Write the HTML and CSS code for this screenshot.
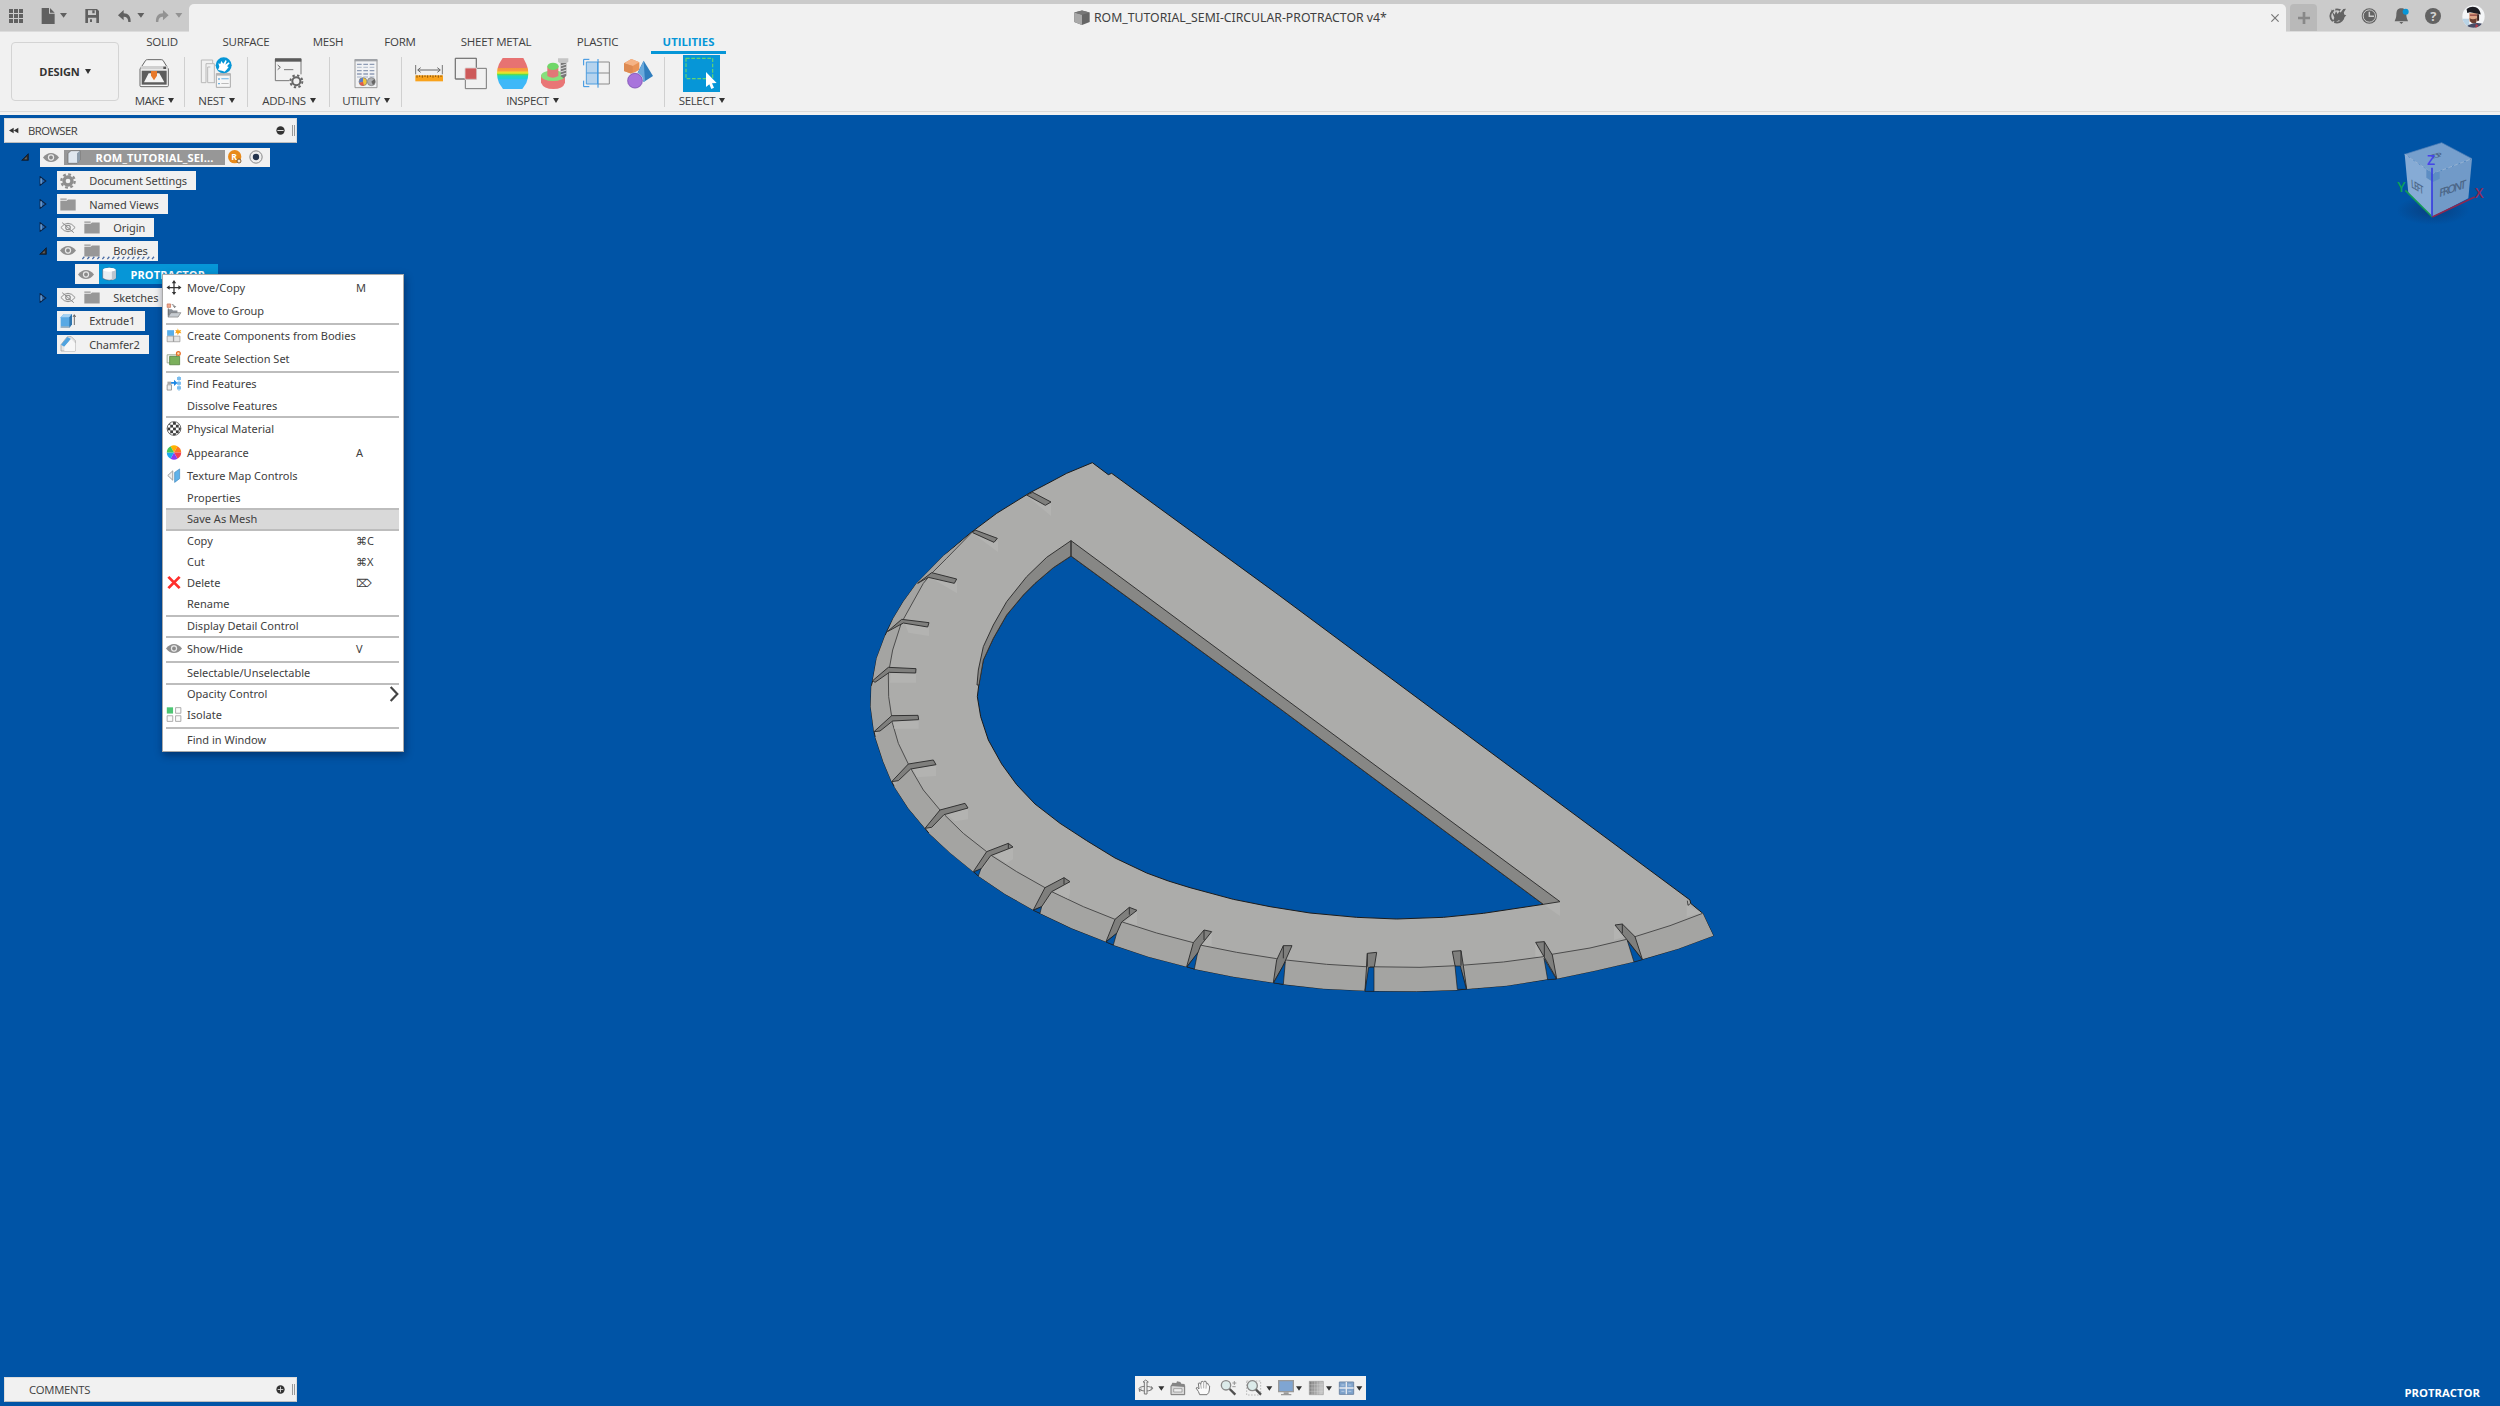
FILE: index.html
```html
<!DOCTYPE html>
<html lang="en">
<head>
<meta charset="utf-8">
<title>ROM_TUTORIAL_SEMI-CIRCULAR-PROTRACTOR v4*</title>
<link rel="stylesheet" href="styles.css">
</head>
<body>
<svg class="defs" width="0" height="0" aria-hidden="true">
  <defs>
    <symbol id="eye" viewBox="0 0 46 30"><path d="M0 15Q10 2 23 2T46 15Q36 28 23 28T0 15Z" fill="#8f8f8f"/><circle cx="23" cy="15" r="9" fill="#e9e9e9"/><circle cx="23" cy="15" r="5.5" fill="#8a8a8a"/></symbol>
    <symbol id="eye-off" viewBox="0 0 46 34"><path d="M1 17Q11 4 23 4T45 17Q35 30 23 30T1 17Z" fill="none" stroke="#8c8c8c" stroke-width="3"/><circle cx="23" cy="17" r="7" fill="none" stroke="#8c8c8c" stroke-width="3.500"/><path d="M5 2L41 33" stroke="#8c8c8c" stroke-width="3"/></symbol>
    <symbol id="folder" viewBox="0 0 48 38"><path d="M1 1H20V5H1ZM1 8H20L24 4H47V37H1Z" fill="#979797"/></symbol>
    <symbol id="closed" viewBox="0 0 20 28"><path d="M2 2L18 14L2 26Z" fill="#2a68ae" stroke="#0b2345" stroke-width="3"/><path d="M4.500 6V22" stroke="#8fb6e0" stroke-width="3"/></symbol>
    <symbol id="open" viewBox="0 0 24 24"><path d="M22 2V22H2Z" fill="#2b2b2b" stroke="#0a1220" stroke-width="2"/><path d="M17 11V19H10Z" fill="#6a6a6a"/></symbol>
  </defs>
</svg>

<header class="titlebar">
  <div class="quick">
    <svg viewBox="0 0 565 96">
      <g fill="#606060"><path d="M27 27h12v12H27zM42 27h12v12H42zM57 27h12v12H57zM27 42h12v12H27zM42 42h12v12H42zM57 42h12v12H57zM27 57h12v12H27zM42 57h12v12H42zM57 57h12v12H57z"/>
      <path d="M125 24h22v17h17v31h-39zM150 24l14 14h-14zM180 39h21l-10 14zM412 39h21l-10 14z"/>
      <path fill-rule="evenodd" d="M256 27h35l6 6v36h-41zM264 31v14h24V31zM264 53v16h25V53z"/><path d="M277 31h7v9h-7zM270 58h6v8h-6z"/>
      <path d="M354 46l17-16v10c14 0 22 10 21 26h-7c0-11-5-16-14-16v11z"/></g>
      <g fill="#939393"><path d="M506 46l-17-16v10c-14 0-22 10-21 26h7c0-11 5-16 14-16v11zM526 39h21l-10 14z"/></g>
    </svg>
  </div>
  <div class="doc-tab">
    <svg class="doc-cube" viewBox="0 0 48 46"><path d="M1 7L24 1L47 7V36L24 45L1 36Z" fill="#666"/><path d="M1 7L24 14V45L1 36Z" fill="#a9a9a9"/><path d="M1 7L24 1L47 7L24 14Z" fill="#777"/></svg>
    <span>ROM_TUTORIAL_SEMI-CIRCULAR-PROTRACTOR v4*</span>
    <svg class="close" viewBox="0 0 24 24"><path d="M1 1L23 23M23 1L1 23" stroke="#777" stroke-width="3.5"/></svg>
  </div>
  <div class="session">
    <div class="new-tab"><svg viewBox="0 0 36 36"><path d="M14 0h8v14h14v8H22v14h-8V22H0v-8h14z" fill="#888"/></svg></div>
    <svg class="status" viewBox="485 0 291 96">
      <circle cx="530" cy="48" r="20" fill="none" stroke="#636363" stroke-width="5.500"/><path d="M511 26l12 18 4-10 5 8 9-14 16-2-10 17 11 3-8 8-7 10-8-3-9 6-8-4 4-10z" fill="#636363"/><path d="M516 18l8 14M520 64l-4 11M548 24l-9 12" stroke="#cbcbcb" stroke-width="5"/>
      <circle cx="627" cy="48" r="23" fill="#636363"/><circle cx="627" cy="48" r="18.500" fill="none" stroke="#cbcbcb" stroke-width="3"/><path d="M627 35v14h14" fill="none" stroke="#cbcbcb" stroke-width="4.500"/>
      <path d="M723 25c12 0 15 8 15 20 0 10 4 13 5 19h-40c1-6 5-9 5-19 0-12 3-20 15-20z M717 66h12l-6 6z" fill="#636363"/><circle cx="736" cy="35" r="9" fill="#0696d7"/>
    </svg>
    <span class="help">?</span>
    <svg class="avatar" viewBox="0 0 70 70"><defs><clipPath id="round"><circle cx="35" cy="35" r="34"/></clipPath></defs><g clip-path="url(#round)"><path d="M0 0h70v70H0z" fill="#f4f6f8"/><path d="M0 42h22v28H0z" fill="#b9d2e4"/><path d="M22 24h26v26H22z" fill="#dba587"/><path d="M14 12q14-10 28-5 12 4 15 22l-9-2-24-5-8 2z" fill="#1c1c22"/><path d="M24 29h22v4H24z" fill="#8c3f3c"/><path d="M23 40q10 6 22 0l-2 15q-12 4-18-5z" fill="#6a4034"/><path d="M14 66q14-14 46-10v14H14z" fill="#474c66"/><path d="M46 28h6v20h-6z" fill="#3a2522"/><path d="M42 58l7 4-3 8h-6z" fill="#b33c4a"/></g></svg>
  </div>
</header>

<div class="ribbon">
  <button class="workspace">DESIGN<i class="caret"></i></button>
  <div class="ribbon-main">
    <nav class="tabs">
      <span class="tab w76">SOLID</span><span class="tab w92">SURFACE</span><span class="tab w72">MESH</span><span class="tab w72">FORM</span><span class="tab w120">SHEET METAL</span><span class="tab w83">PLASTIC</span><span class="tab active">UTILITIES</span>
    </nav>
    <div class="groups">
      <section class="group g-make">
        <div class="icons"><svg viewBox="416 172 96 96" width="32" height="32"><path d="M422 208l17-26q2-2 5-2h42q3 0 5 2l16 26v50q0 3-3 3h-79q-3 0-3-3z" fill="#f7f7f7" stroke="#666" stroke-width="3"/><path d="M424 199h82v10h-82z" fill="#d0d0d0"/><path d="M492 201h8v7h-8z" fill="#555"/><path d="M427 213h75v42h-75z" fill="#5c5c5c"/><path d="M434 248l14-27h9l7 16 7-16h9l15 27z" fill="#f3f3f3"/><path d="M455 214h18v14l-9 14-9-14z" fill="#e8792a"/></svg></div>
        <div class="label">MAKE<i class="caret"></i></div>
      </section>
      <section class="group g-nest">
        <div class="icons"><svg viewBox="604 172 96 96" width="32" height="32"><path d="M608 181h34v10M608 181v68h14v-57h25v57M627 249h22M627 249v-47h8" fill="none" stroke="#b9b9b9" stroke-width="3"/><path d="M653 222h42v41h-42z" fill="#f6f6f6" stroke="#aaa" stroke-width="3"/><path d="M653 221h42v7h-42z" fill="#b5b5b5"/><path d="M658 236h6v4h-6zM658 250h6v4h-6zM668 236h22v3h-22z" fill="#6fb3e2"/><path d="M668 250h22v3h-22z" fill="#bbb"/><circle cx="675" cy="197" r="24" fill="#0696d7"/><path d="M658 211l4-10-3-10 6 2 3-9 6 8 7-11 3 3-4 11 10-7 3 3-8 9 5 2-5 7-7 7-8-3z" fill="#fff"/></svg></div>
        <div class="label">NEST<i class="caret"></i></div>
      </section>
      <section class="group g-addins">
        <div class="icons"><svg viewBox="820 172 96 96" width="32" height="32"><path d="M827 178h77v46M827 178v65h42" fill="none" stroke="#777" stroke-width="3"/><path d="M826 176h79v10h-79z" fill="#5b5b5b"/><path d="M834 196l8 7-8 7" fill="none" stroke="#666" stroke-width="3"/><path d="M853 210h28" stroke="#777" stroke-width="3"/><circle cx="890" cy="245" r="12" fill="none" stroke="#666" stroke-width="6"/><circle cx="890" cy="245" r="18" fill="none" stroke="#666" stroke-width="6" stroke-dasharray="7 7.140"/></svg></div>
        <div class="label">ADD-INS<i class="caret"></i></div>
      </section>
      <section class="group g-utility">
        <div class="icons"><svg viewBox="1052 172 96 96" width="32" height="32"><path d="M1067 180h66v84h-66z" fill="#f1f2f4" stroke="#9a9a9a" stroke-width="3"/><path d="M1066 178h68v7h-68z" fill="#a0a3a8"/><path d="M1073 194h14M1092 194h14M1111 194h14M1073 213h14M1092 213h14M1111 213h14M1073 223h14M1092 223h14M1111 223h14" stroke="#8e9cb5" stroke-width="4"/><path d="M1073 203h14M1092 203h14M1111 203h14M1073 232h14M1092 232h14M1111 232h14" stroke="#bcc5d3" stroke-width="4"/><circle cx="1091" cy="246" r="12" fill="#f0c63c" stroke="#777" stroke-width="2"/><path d="M1091 246V234a12 12 0 0 0-11 16z" fill="#5d7cc9"/><path d="M1091 246l-11 4a12 12 0 0 0 14 8z" fill="#df5a4e"/><circle cx="1116" cy="246" r="12" fill="#aeb0b3" stroke="#777" stroke-width="2"/><path d="M1116 246l9-8a12 12 0 0 1-4 18z" fill="#666"/></svg></div>
        <div class="label">UTILITY<i class="caret"></i></div>
      </section>
      <section class="group g-inspect">
        <div class="icons">
          <svg viewBox="36 168 102 102" width="34" height="34"><path d="M46 226h83v18H46z" fill="#f9a21b"/><path d="M51 226v7M59 226v5M67 226v7M75 226v5M83 226v7M91 226v5M99 226v7M107 226v5M115 226v7M123 226v5" stroke="#8a5408" stroke-width="3"/><path d="M47 195v28M127 195v28" stroke="#777" stroke-width="3"/><path d="M54 210h66M62 203l-9 7 9 7M112 203l9 7-9 7" fill="none" stroke="#666" stroke-width="3"/></svg>
          <svg viewBox="162 168 102 102" width="34" height="34"><path d="M166 175h63v62h-63zM196 205h63v61h-63z" fill="#f1f1f1" stroke="#777" stroke-width="3"/><path d="M166 175h63v62h-63z" fill="none" stroke="#777" stroke-width="3"/><path d="M195 204h35v34h-35z" fill="#cd5a5a" stroke="#f1f1f1" stroke-width="2"/></svg>
          <svg viewBox="288 168 102 102" width="34" height="34"><defs><linearGradient id="zebra" x2="0" y2="1"><stop offset="0" stop-color="#e77272"/><stop offset=".32" stop-color="#e77272"/><stop offset=".33" stop-color="#f4953f"/><stop offset=".42" stop-color="#f9a03b"/><stop offset=".45" stop-color="#f6e02c"/><stop offset=".5" stop-color="#c7e32f"/><stop offset=".53" stop-color="#5fdc4b"/><stop offset=".58" stop-color="#22d5c3"/><stop offset=".68" stop-color="#1dcbe5"/><stop offset=".7" stop-color="#3fb8f8"/><stop offset="1" stop-color="#3fb8f8"/></linearGradient></defs><path d="M308 174h62l9 18q12 28 0 57l-12 18h-58l-12-18q-12-29 0-57z" fill="url(#zebra)"/></svg>
          <svg viewBox="414 168 102 102" width="34" height="34"><path d="M423 226v22q8 19 37 19t35-19v-22z" fill="#e97676"/><ellipse cx="459" cy="227" rx="36" ry="16" fill="#86e07c"/><path d="M442 200v28q16 10 33 0v-28z" fill="#e27777"/><ellipse cx="459" cy="199" rx="17" ry="11" fill="#6fd768"/><path d="M474 175h31v10l-5 4h-21l-5-4z" fill="#c5c5c5"/><path d="M482 189h17v38l-8 8-9-6z" fill="#777"/><path d="M481 198l19-6M481 207l19-6M481 216l19-6M481 225l19-6" stroke="#dcdcdc" stroke-width="3"/></svg>
          <svg viewBox="540 168 102 102" width="34" height="34"><path d="M594 186h34v66h-34M594 219h34" fill="none" stroke="#8b8b8b" stroke-width="3"/><path d="M560 186h33v66h-33z" fill="#b5d3ee"/><path d="M559 186h34v66h-34zM559 219h34" fill="none" stroke="#4f9ddd" stroke-width="3"/><path d="M568 178h-17v18M568 260h-17v-18M594 177v86" fill="none" stroke="#2f8fe0" stroke-width="3"/></svg>
          <svg viewBox="666 168 102 102" width="34" height="34"><path d="M672 190l22-13 24 10v22l-22 13-24-9z" fill="#e99357"/><path d="M672 190l22-13 24 10-20 11z" fill="#f5b386"/><path d="M698 198v24l-26-9v-23z" fill="#dd8a52"/><path d="M731 182l28 46-28 18-20-24z" fill="#2f7dbd"/><path d="M731 182l4 63-24-20z" fill="#69a9dc"/><circle cx="705" cy="242" r="23.500" fill="#a874dc" stroke="#f1f1f1" stroke-width="2"/><circle cx="705" cy="242" r="22" fill="none" stroke="#744aa8" stroke-width="2"/></svg>
        </div>
        <div class="label">INSPECT<i class="caret"></i></div>
      </section>
      <section class="group g-select">
        <div class="icons"><svg viewBox="849 165 111 111" width="37" height="37"><path d="M849 165h111v111H849z" fill="#0696d7"/><path d="M858 175h80v61h-80z" fill="none" stroke="#63d471" stroke-width="3.500" stroke-dasharray="11 5"/><path d="M918 216v45l10-8 6 14 8-4-6-13 14-1z" fill="#fff"/></svg></div>
        <div class="label">SELECT<i class="caret"></i></div>
      </section>
    </div>
  </div>
</div>

<main class="viewport">
  <svg class="model" viewBox="0 0 2610 1680">
    <path fill="#acacaa" stroke="#1b1b1b" stroke-width="3" stroke-linejoin="round" fill-rule="evenodd" d="M697 38L620 70L560 102L510 128L410 190L330 250L250 318L170 400L130 455L100 505L80 545L75 558L50 625L38 692L34 708L32 770L42 845L46 862L70 935L95 995L103 1010L145 1075L195 1135L207 1150L270 1208L340 1265L355 1278L435 1332L520 1380L540 1390L635 1435L738 1475L760 1485L865 1520L980 1550L1003 1557L1120 1580L1240 1598L1270 1603L1390 1616L1515 1622L1542 1623L1670 1624L1792 1620L1820 1617L1940 1607L2062 1588L2090 1586L2205 1562L2322 1535L2347 1528L2455 1496L2560 1457L2528 1390L2492 1360L2490 1350L1842 870L1260 438L755 70L745 74ZM633 318L580 353L525 400L490 435L440 495L400 565L370 630L357 700L352 740L362 800L385 870L425 942L470 1004L525 1062L600 1120L680 1172L765 1224L860 1269L925 1293L990 1313L1120 1348L1230 1370L1350 1389L1490 1402L1610 1407L1750 1402L1870 1390L2050 1363L1260 776Z"/>
    <g fill="#a4a4a2"><path d="M325 258L260 325L215 370L190 400L130 508L82 545L100 505L130 455L170 400L250 318ZM122 525L98 600L88 655L38 692L50 625L75 558L85 545ZM85 668L86 740L95 800L42 845L32 770L34 708L45 697ZM97 818L115 880L145 942L95 995L70 935L46 862L60 843ZM155 960L190 1020L240 1080L195 1135L145 1075L103 1010L115 992ZM255 1096L310 1150L380 1205L340 1265L270 1208L207 1150L215 1132ZM395 1217L470 1265L555 1313L520 1380L435 1332L355 1278ZM575 1325L670 1370L765 1408L738 1475L635 1435L540 1390ZM787 1416L890 1449L1000 1478L980 1550L865 1520L760 1485ZM1022 1486L1130 1507L1250 1526L1240 1598L1120 1580L1003 1557ZM1278 1530L1400 1543L1515 1550V1622L1390 1616L1270 1603ZM1542 1551L1680 1552L1790 1547L1792 1620L1670 1624L1542 1623ZM1815 1545L1930 1536L2050 1520L2062 1588L1940 1607L1820 1617ZM2075 1513L2190 1494L2300 1468L2322 1535L2205 1562L2090 1586ZM2325 1460L2430 1427L2528 1390L2560 1457L2455 1496L2347 1528Z"/></g>
    <path fill="none" stroke="#4c4c4c" stroke-width="3" d="M335 248L260 325L215 370L190 400L130 508L122 525L98 600L88 655L85 675L86 740L95 800L97 818L115 880L145 942L155 960L190 1020L240 1080L255 1096L310 1150L380 1205L395 1217L470 1265L555 1313L575 1325L670 1370L765 1408L787 1416L890 1449L1000 1478L1020 1485L1130 1507L1250 1526L1278 1530L1400 1543L1515 1550L1680 1552L1790 1547L1815 1545L1930 1536L2050 1520L2075 1513L2190 1494L2300 1468L2325 1460L2430 1427L2528 1390"/>
    <path fill="#b3b3b1" d="M500 137L556 166L573 160V198ZM345 255L402 278L414 272V306ZM215 385L283 400L291 392V430ZM135 521L203 531L207 525V558L145 548ZM92 670H168V698H90ZM100 815L176 808V836H103ZM160 957L228 945V978L170 982ZM262 1094L324 1075V1108L285 1114ZM402 1217L459 1192V1228L440 1240ZM582 1325L630 1296V1330L625 1346ZM795 1416L831 1383V1425ZM1025 1484L1055 1448V1488ZM2100 1355L2050 1363L2100 1398ZM2290 1462L2262 1425V1470ZM2046 1518L2026 1480V1520ZM2480 1365V1400L2525 1388Z"/>
    <g stroke="#333" stroke-width="3" stroke-linejoin="round">
      <path fill="#878785" d="M633 272L560 322L500 380L440 455L400 525L370 590L355 660L351 705L357 705L370 630L400 565L440 495L490 435L525 400L580 353L633 318ZM633 272L1260 735L2100 1355L2050 1363L1260 776L633 318Z"/>
      <path fill="#7f7f7d" d="M500 135L518 127L573 156L556 166ZM338 248L345 240L412 265L402 277ZM173 400L215 368L290 387L283 400L205 382ZM82 545L125 508L207 518L203 531L130 519ZM38 692L85 652L168 656L167 669L88 667L45 697ZM42 845L95 797L174 796L176 809L98 813L60 843ZM95 995L145 942L220 930L228 944L152 957L115 992ZM195 1135L240 1080L315 1060L324 1074L252 1094L215 1132ZM340 1265L380 1205L445 1180L459 1191L392 1217L362 1258ZM520 1380L555 1313L612 1283L630 1295L575 1325L545 1370ZM738 1475L765 1408L808 1372L831 1381L785 1416L770 1450ZM980 1550L1000 1478L1032 1440L1055 1445L1022 1486L1013 1510ZM1240 1598L1250 1530L1270 1487H1296L1277 1530L1268 1550ZM1515 1622L1522 1510L1550 1507L1543 1551H1530ZM1777 1504L1803 1502L1810 1547L1820 1617L1803 1560L1785 1547ZM2027 1477L2053 1475L2077 1515L2090 1586L2052 1520ZM2265 1425L2287 1422L2325 1460L2347 1528L2300 1468Z"/>
      <path fill="none" d="M445 1180V1196M612 1283V1303M808 1372V1394M1032 1440V1470M1270 1487V1525M1522 1510V1550M1803 1502V1547M2053 1475V1520M2287 1422V1450"/>
    </g>
    <g fill="#0054a6" stroke="#1b1b1b" stroke-width="2"><path d="M363 1256L342 1266L355 1278ZM545 1370L520 1381L540 1390ZM770 1450L738 1476L760 1485ZM1013 1508L981 1551L1003 1557ZM1276 1535L1241 1599L1270 1603ZM1526 1552H1542V1624H1515ZM1785 1548H1801L1819 1618H1792ZM2052 1525L2089 1587L2063 1589ZM2302 1472L2347 1529L2322 1536Z"/></g>
    <path fill="none" stroke="#333" stroke-width="2.500" d="M2482 1352L2484 1366L2492 1360"/>
  </svg>

  <svg class="viewcube" viewBox="460 410 300 270">
    <defs><radialGradient id="shade"><stop offset="0" stop-color="#083f80"/><stop offset="1" stop-color="#0054a6"/></radialGradient></defs>
    <ellipse cx="580" cy="630" rx="110" ry="44" fill="url(#shade)"/>
    <path d="M495 462L606 427L697 475L580 520Z" fill="#769fcd"/><path d="M495 462L580 520L578 650L506 578Z" fill="#86abd5"/><path d="M580 520L697 475L686 594L578 650Z" fill="#719ac8"/>
    <path d="M495 462L606 427L697 475" fill="none" stroke="#5582b8" stroke-width="2"/><path d="M495 462L580 520L697 475" fill="none" stroke="#9ab5d4" stroke-width="3" stroke-dasharray="12 7"/><path d="M560 506L580 520L600 512V535L580 545L560 532Z" fill="#5d8dc3"/>
    <g fill="#4c6788" font-family="Open Sans, sans-serif" font-weight="600"><text transform="matrix(.62 .36 .05 1 515 561)" font-size="34" textLength="60">LEFT</text><text transform="matrix(.94 -.34 -.06 1 598 591)" font-size="34" textLength="86">FRONT</text><text transform="matrix(.9 -.25 .6 .5 576 476)" font-size="28" textLength="42">TOP</text></g>
    <path d="M578 650L497 570" stroke="#119c55" stroke-width="5"/><path d="M578 650L705 590" stroke="#8d2750" stroke-width="5"/><path d="M577 502V648" stroke="#3a3fe0" stroke-width="5"/>
    <g font-family="Open Sans, sans-serif" font-weight="600" font-size="42"><text x="562" y="494" fill="#4545e8">Z</text><text x="473" y="574" fill="#0ca25a">Y</text><text x="705" y="594" fill="#8f2a55">X</text></g>
  </svg>

  <aside class="side">
    <div class="panel-head">
      <svg class="collapse" viewBox="0 0 30 20"><path d="M0 10L14 2V18ZM14 10L28 2V18Z" fill="#333"/></svg>
      <span>BROWSER</span>
      <svg class="pin" viewBox="0 0 26 26"><circle cx="13" cy="13" r="12" fill="#333"/><path d="M4 13h18" stroke="#ddd" stroke-width="3"/></svg><i class="grip"></i>
    </div>
    <ul class="tree">
      <li class="row root"><svg class="arrow a-open"><use href="#open"/></svg><div class="box"><svg class="eye"><use href="#eye"/></svg><div class="title"><svg viewBox="0 0 42 42" width="14" height="14"><path d="M3 10L12 2H39V30L30 40H3Z" fill="#dfe7ef" stroke="#666" stroke-width="2"/><path d="M30 10L39 2V30L30 40Z" fill="#8c9cab"/></svg><b>ROM_TUTORIAL_SEI...</b></div><svg class="badge" viewBox="0 0 42 42"><circle cx="20" cy="20" r="20" fill="#e88a1a"/><circle cx="33" cy="33" r="6" fill="#f6e7d2" stroke="#70481a" stroke-width="2.500"/><text x="10" y="29" font-family="Open Sans, sans-serif" font-weight="700" font-size="26" fill="#fff">R</text></svg><svg class="radio" viewBox="0 0 42 42"><circle cx="21" cy="21" r="18.500" fill="#eee" stroke="#888" stroke-width="3"/><circle cx="21" cy="21" r="9.500" fill="#24344d"/></svg></div></li>
      <li class="row l1"><svg class="arrow"><use href="#closed"/></svg><div class="box w-doc"><svg class="ico" viewBox="0 0 48 48"><circle cx="24" cy="24" r="12" fill="none" stroke="#8e8e8e" stroke-width="10"/><circle cx="24" cy="24" r="20" fill="none" stroke="#8e8e8e" stroke-width="7" stroke-dasharray="8.500 7.200"/></svg><span class="name">Document Settings</span></div></li>
      <li class="row l1"><svg class="arrow"><use href="#closed"/></svg><div class="box w-views"><svg class="ico fold"><use href="#folder"/></svg><span class="name">Named Views</span></div></li>
      <li class="row l1"><svg class="arrow"><use href="#closed"/></svg><div class="box w-origin"><svg class="eye"><use href="#eye-off"/></svg><svg class="ico fold"><use href="#folder"/></svg><span class="name near">Origin</span></div></li>
      <li class="row l1"><svg class="arrow a-open"><use href="#open"/></svg><div class="box w-bodies hatch"><svg class="eye"><use href="#eye"/></svg><svg class="ico fold"><use href="#folder"/></svg><span class="name near">Bodies</span><svg class="ticks" viewBox="0 0 222 10"><path d="M4 9l6-7M19 9l6-7M34 9l6-7M49 9l6-7M64 9l6-7M79 9l6-7M94 9l6-7M109 9l6-7M124 9l6-7M139 9l6-7M154 9l6-7M169 9l6-7M184 9l6-7M199 9l6-7M213 9l6-7" stroke="#4c6ea6" stroke-width="4"/></svg></div></li>
      <li class="row l2"><div class="box w-prot"><svg class="eye"><use href="#eye"/></svg><div class="selected"><svg viewBox="0 0 44 42" width="14.500" height="14"><path d="M2 8Q22-4 42 8V34Q22 46 2 34Z" fill="#e9edf1" stroke="#556" stroke-width="1.500"/><path d="M30 4Q38 5 42 8V34Q38 38 30 40Z" fill="#bcc5ce"/><ellipse cx="22" cy="8" rx="19" ry="6" fill="#fff"/></svg><b>PROTRACTOR</b></div></div></li>
      <li class="row l1"><svg class="arrow"><use href="#closed"/></svg><div class="box w-sketch"><svg class="eye"><use href="#eye-off"/></svg><svg class="ico fold"><use href="#folder"/></svg><span class="name near">Sketches</span></div></li>
      <li class="row l1"><i class="arrow"></i><div class="box w-ext"><svg class="ico" viewBox="0 0 48 48"><path d="M2 13L11 3H36V34L27 45H2Z" fill="#58a9e4"/><path d="M2 13L11 3H36L28 13Z" fill="#a6d2f2"/><path d="M28 13L36 3V34L28 45Z" fill="#2f75ad"/><path d="M3 40H28V45H3Z" fill="#9fb3c2"/><path d="M43 36V6M39 12l4-7 4 7" fill="none" stroke="#555" stroke-width="2.500"/></svg><span class="name">Extrude1</span></div></li>
      <li class="row l1"><i class="arrow"></i><div class="box w-cham"><svg class="ico" viewBox="0 0 48 48"><path d="M3 26L22 2H34L46 14V45H3Z" fill="#e4e4e4" stroke="#999" stroke-width="2"/><path d="M3 26L22 3L33 9L13 32Z" fill="#50a3df"/><path d="M13 32L33 9L46 22V45H13Z" fill="#f7f7f7"/></svg><span class="name">Chamfer2</span></div></li>
    </ul>
  </aside>

  <footer class="bottom">
    <div class="panel-head comments"><span>COMMENTS</span><svg class="pin" viewBox="0 0 26 26"><circle cx="13" cy="13" r="12" fill="#333"/><path d="M5 13h16M13 5v16" stroke="#ddd" stroke-width="2.500"/></svg><i class="grip"></i></div>
    <div class="navbar"><svg viewBox="45 48 693 72">
      <g fill="none" stroke="#777" stroke-width="3"><ellipse cx="77" cy="86" rx="20" ry="7"/><path d="M73 102V66h-4l8-6 8 6h-4v36z" fill="#eee"/><path d="M60 96l-3-7 8-2M94 79l4 6-7 3"/></g>
      <g><path d="M153 77h41v27h-41z" fill="#d8d8d8" stroke="#777" stroke-width="3"/><path d="M153 77l4-9 12 1 2-5 10 2 3 5 10 1v9z" fill="#858585"/><path d="M161 86h25v10h-25z" fill="#eee" stroke="#888" stroke-width="2"/></g>
      <path d="M239 104q-2-9-11-20 4-4 9 3l-2-17q5-4 7 3l2-8q5-3 7 2l3-4q6 0 5 7 6-2 6 5l4 3-1 12q0 8-7 14z" fill="#fafafa" stroke="#777" stroke-width="3"/><path d="M242 73l2 13M251 68v17M259 70l-1 16" stroke="#888" stroke-width="2"/>
      <g><circle cx="318" cy="76" r="14" fill="#dcebea" stroke="#888" stroke-width="4"/><path d="M329 87l17 17" stroke="#505050" stroke-width="7"/><path d="M343 63v12M337 69h12M337 80h10" stroke="#888" stroke-width="2.500"/></g>
      <g><path d="M380 63h42v42h-42z" fill="none" stroke="#bbb" stroke-width="3" stroke-dasharray="5 4"/><circle cx="397" cy="77" r="15" fill="#dcebea" stroke="#888" stroke-width="4"/><path d="M408 89l15 15" stroke="#505050" stroke-width="7"/></g>
      <g><path d="M476 62h44v33h-44z" fill="#7fa5d2" stroke="#999" stroke-width="4"/><path d="M491 97h15v5h8v4h-31v-4h8z" fill="#999"/></g>
      <defs><linearGradient id="gridshade" x2="1" y2=".2"><stop offset="0" stop-color="#777"/><stop offset="1" stop-color="#c8c8c8"/></linearGradient></defs><path d="M568 64h42v40h-42z" fill="url(#gridshade)" stroke="#999" stroke-width="2"/><path d="M576 64v40M584 64v40M592 64v40M600 64v40M568 74h42M568 84h42M568 94h42" stroke="#ddd" stroke-width="1"/>
      <path d="M658 66h43v37h-43z" fill="#7fa3cc" stroke="#6f87a5" stroke-width="3"/><path d="M679 66v37M658 84h43" stroke="#e6e9ee" stroke-width="4"/><path d="M664 75h9M685 75h9M664 94h9M685 94h9" stroke="#b6cbe3" stroke-width="3"/>
      <path d="M115 79h18l-9 13zM439 79h18l-9 13zM528 79h18l-9 13zM618 79h18l-9 13zM709 79h18l-9 13z" fill="#333"/>
    </svg></div>
    <strong class="hint">PROTRACTOR</strong>
  </footer>
</main>

<div class="menu">
  <div class="mi h24"><svg viewBox="0 0 48 48"><path d="M24 5v38M5 24h38" stroke="#333" stroke-width="4"/><path d="M24 0l7 10H17zM24 48l7-10H17zM0 24l10-7v14zM48 24l-10-7v14z" fill="#333"/></svg><span>Move/Copy</span><kbd>M</kbd></div>
  <div class="mi h23"><svg viewBox="0 0 48 48"><path d="M4 20h13l4 4h14v20H4z" fill="#8a9097"/><path d="M14 31h32l-9 14H5z" fill="#c7ccd1" stroke="#777" stroke-width="2"/><path d="M2 3h11v11H2z" fill="#f0a98c" stroke="#c0694d" stroke-width="2"/><path d="M17 5q9 0 9 8M22 10l4 5 4-5M6 17v22" fill="none" stroke="#666" stroke-width="2.500"/></svg><span>Move to Group</span></div>
  <hr>
  <div class="mi h23"><svg viewBox="0 0 48 48"><path d="M2 7h22v18H2z" fill="#58aeea"/><path d="M2 26h20v18H2zM23 26h20v18H23z" fill="#e4e4e4" stroke="#888" stroke-width="2"/><path d="M36 1l3 7 8-2-3 6 4 5-8-1-4 7-2-7-7 1 4-5-3-6 7 1z" fill="#f8a51b"/></svg><span>Create Components from Bodies</span></div>
  <div class="mi h23"><svg viewBox="0 0 48 48"><path d="M2 12h30v26H2z" fill="#f4f4f4" stroke="#8b9c82" stroke-width="2.500"/><path d="M10 17h32v27H10z" fill="#7bb05c" stroke="#55803f" stroke-width="2.500"/><circle cx="38" cy="8" r="6" fill="#fbe1b5" stroke="#e66a22" stroke-width="4"/></svg><span>Create Selection Set</span></div>
  <hr>
  <div class="mi h23"><svg viewBox="0 0 48 48"><path d="M34 3h12v10H34zM34 18h12v10H34zM34 33h12v10H34z" fill="#6db7ee"/><path d="M40 0v48" stroke="#89c4f1" stroke-width="3"/><path d="M14 19h10v-7l11 10-11 10v-7H14z" fill="#1e88e5"/><path d="M2 28h14v17H2z" fill="#ececec" stroke="#888" stroke-width="2.500"/><path d="M3 18h12v8H3z" fill="#aaa"/></svg><span>Find Features</span></div>
  <div class="mi h20"><span>Dissolve Features</span></div>
  <hr>
  <div class="mi h23"><svg viewBox="0 0 48 48"><defs><pattern id="check" x="3" y="3" width="18" height="18" patternUnits="userSpaceOnUse"><path d="M0 0h9v9H0zM9 9h9v9H9z" fill="#3c3c3c"/></pattern></defs><circle cx="24" cy="24" r="22.500" fill="#fff"/><circle cx="24" cy="24" r="22" fill="url(#check)" stroke="#666" stroke-width="3"/></svg><span>Physical Material</span></div>
  <div class="mi h24"><svg viewBox="0 0 48 48"><path d="M24 24L13 4a23 23 0 0 1 22 0z" fill="#ffb300"/><path d="M24 24L35 4a23 23 0 0 1 12 20z" fill="#ff7a22"/><path d="M24 24H47a23 23 0 0 1-12 20z" fill="#f4404f"/><path d="M24 24l11 20a23 23 0 0 1-22 0z" fill="#8b3df0"/><path d="M24 24L13 44A23 23 0 0 1 1 24z" fill="#1aa8f0"/><path d="M24 24H1A23 23 0 0 1 13 4z" fill="#43c85a"/></svg><span>Appearance</span><kbd>A</kbd></div>
  <div class="mi h23"><svg viewBox="0 0 48 48"><path d="M4 24L20 9v30z" fill="#eee" stroke="#999" stroke-width="3"/><path d="M26 14L42 3v31L26 46z" fill="#5fb2ea" stroke="#3d83b8" stroke-width="2"/></svg><span>Texture Map Controls</span></div>
  <div class="mi h20"><span>Properties</span></div>
  <hr>
  <div class="mi h19 hover"><span>Save As Mesh</span></div>
  <hr>
  <div class="mi h21"><span>Copy</span><kbd>⌘C</kbd></div>
  <div class="mi h20"><span>Cut</span><kbd>⌘X</kbd></div>
  <div class="mi h22"><svg viewBox="0 0 48 48"><path d="M6 6L42 42M42 6L6 42" stroke="#ff2f2c" stroke-width="9"/></svg><span>Delete</span><kbd>⌦</kbd></div>
  <div class="mi h21"><span>Rename</span></div>
  <hr>
  <div class="mi h19"><span>Display Detail Control</span></div>
  <hr>
  <div class="mi h23"><svg><use href="#eye"/></svg><span>Show/Hide</span><kbd>V</kbd></div>
  <hr>
  <div class="mi h20"><span>Selectable/Unselectable</span></div>
  <hr>
  <div class="mi h19"><span>Opacity Control</span><svg class="sub" viewBox="0 0 28 48"><path d="M4 3L24 24L4 45" fill="none" stroke="#444" stroke-width="6.500"/></svg></div>
  <div class="mi h23"><svg viewBox="0 0 48 48"><path d="M1 1h20v20H1z" fill="#4cc573"/><path d="M29 2h17v18H29zM2 28h18v18H2zM29 28h17v18H29z" fill="#fafafa" stroke="#999" stroke-width="2.500"/></svg><span>Isolate</span></div>
  <hr>
  <div class="mi h22"><span>Find in Window</span></div>
</div>
</body>
</html>
```
FILE: styles.css
```css
* { box-sizing: border-box; }
html, body { margin: 0; height: 100%; }
body {
  display: flex;
  flex-direction: column;
  height: 1406px;
  overflow: hidden;
  background: #f1f1f1;
  color: #404040;
  font: 11px "Noto Sans", "Open Sans", sans-serif;
}
svg { display: block; flex: none; }
.defs { position: absolute; }

/* title bar */
.titlebar { display: flex; height: 32px; flex: none; background: #cbcbcb; border-bottom: 1px solid #dcdcdc; }
.quick { width: 189px; flex: none; }
.quick svg { width: 188.3px; height: 32px; }
.doc-tab {
  display: flex;
  align-items: center;
  flex: 1;
  height: 28px;
  margin-top: 4px;
  padding: 0 7px 0 885px;
  background: #f1f1f1;
  border-radius: 5px 5px 0 0;
  font-size: 12.25px;
}
.doc-tab span { flex: 1; margin-left: 4px; line-height: 28px; }
.doc-cube { width: 16px; height: 15.5px; }
.doc-tab .close { width: 8px; height: 8px; }
.session { display: flex; width: 214px; flex: none; padding-left: 4px; }
.new-tab { display: grid; place-items: center; flex: none; width: 27px; height: 27px; margin-top: 4px; background: #b9b9b9; border-radius: 4px 4px 0 0; }
.new-tab svg { width: 12px; height: 12px; }
.status { width: 97px; height: 32px; margin-left: 4.7px; margin-right: -5.4px; }
.help { flex: none; width: 16px; height: 16px; margin: 8px 20.5px 0 12px; border-radius: 50%; background: #636363; color: #d2d2d2; font: 700 13px/16px "Open Sans", sans-serif; text-align: center; }
.avatar { width: 23px; height: 23px; margin-top: 5px; }

/* ribbon */
.ribbon { display: flex; height: 80px; flex: none; border-bottom: 1px solid #dadada; font-family: "Open Sans", sans-serif; }
.workspace {
  width: 108px;
  height: 59px;
  margin: 10px 5px 0 11px;
  padding: 0;
  border: 1px solid #d4d4d4;
  border-radius: 4px;
  background: #f1f1f1;
  color: #333;
  font: 700 11px "Open Sans", sans-serif;
  letter-spacing: -.1px;
}
.caret { display: inline-block; margin-left: 4px; border: 3px solid transparent; border-top: 5px solid #333; border-bottom: 0; vertical-align: 2px; }
.workspace .caret { margin-left: 5px; }
.tabs { display: flex; height: 22px; font-size: 11.5px; line-height: 20px; letter-spacing: -.25px; text-align: center; }
.tab { height: 22px; }
.w76 { width: 76px; }
.w92 { width: 92px; }
.w72 { width: 72px; }
.w120 { width: 120px; }
.w83 { width: 83px; }
.active { width: 75px; margin-left: 12px; border-bottom: 3px solid #0696d7; color: #0696d7; font-weight: 700; font-size: 11.3px; letter-spacing: 0; }
.groups { display: flex; }
.group { height: 56px; }
.group:not(.g-select) { background: linear-gradient(#d0d0d0, #d0d0d0) right 3px / 1px 50px no-repeat; }
.icons { display: flex; align-items: center; justify-content: center; height: 39px; gap: 8px; padding-bottom: 1px; margin-left: -1px; }
.label { font-size: 11.5px; letter-spacing: -.35px; line-height: 16px; text-align: center; }
.g-make { width: 61px; }
.g-nest { width: 63px; }
.g-addins { width: 82px; }
.g-utility { width: 72px; }
.g-inspect { width: 263px; }
.g-inspect .icons { margin-left: 0; }
.g-inspect .label { margin-left: -2px; }
.g-select { width: 74px; }

/* viewport */
.viewport { position: relative; display: flex; flex-direction: column; justify-content: space-between; flex: 1; margin-top: 3px; background: #0054a6; overflow: hidden; }
.model { position: absolute; left: 860px; top: 335px; width: 870px; height: 560px; }
.viewcube { position: absolute; left: 2393px; top: 22px; width: 100px; height: 90px; }

.panel-head {
  display: flex;
  align-items: center;
  width: 293px;
  height: 25px;
  margin: 3px 0 0 4px;
  padding-bottom: 1px;
  border: 1px solid #dcdcdc;
  border-bottom-color: #bdbdbd;
  background: #f1f1f1;
  font: 11.3px "Open Sans", sans-serif;
  letter-spacing: -.55px;
}
.collapse { width: 10px; height: 7px; margin: 0 9px 0 4px; }
.panel-head span { flex: 1; }
.pin { width: 9px; height: 9px; margin-right: 7px; }
.grip { width: 3px; height: 11px; margin-right: 1px; border: solid #999; border-width: 0 1px; }
.comments { margin: 1px 0 0; padding-left: 24px; letter-spacing: -.3px; }

.side { position: relative; }
.tree { display: flex; flex-direction: column; gap: 3.9px; margin: 4.5px 0 0; padding: 0; list-style: none; letter-spacing: -.05px; }
.row { display: flex; align-items: center; height: 19.5px; }
.l1 { padding-left: 39px; }
.l2 { padding-left: 74.5px; }
.root { padding-left: 21px; }
.arrow { width: 8px; height: 10px; margin-right: 10px; }
.root .arrow { margin-right: 10.5px; }
.box { position: relative; display: flex; align-items: center; height: 19.5px; padding-left: 3px; background: #f1f1f1; }
.root .box { width: 230.5px; }
.w-doc { width: 138.5px; }
.w-views { width: 111px; }
.w-origin { width: 97px; }
.w-bodies { width: 100.5px; }
.w-prot { width: 143.5px; }
.w-sketch { width: 120px; }
.w-ext { width: 88px; }
.w-cham { width: 92px; }
.eye { width: 16px; height: 11px; }
.ico { width: 16px; height: 16px; }
.fold { height: 13px; }
.eye + .ico { margin-left: 8px; }
.name { margin-left: 13.2px; white-space: nowrap; }
.title, .selected { display: flex; align-items: center; color: #fff; font-family: "Open Sans", sans-serif; letter-spacing: .1px; }
.title { width: 161px; height: 15.5px; margin-left: 5px; padding-left: 3px; background: #979797; }
.title b { margin-left: 15px; font-size: 11.1px; }
.badge { width: 14px; height: 14px; margin-left: 3px; }
.radio { width: 14px; height: 14px; margin-left: 7px; }
.selected { flex: 1; height: 19.5px; margin-left: 5px; padding-left: 3.5px; background: #0696d7; }
.selected b { margin-left: 14px; }
.ticks { position: absolute; left: 24px; bottom: 1px; width: 74px; height: 3.5px; }

.bottom { display: flex; align-items: flex-start; height: 30px; margin-left: 4px; }
.navbar { width: 231px; height: 24px; margin-left: 838px; background: #f1f1f1; }
.navbar svg { width: 231px; height: 24px; }
.hint { margin: 8px 20px 0 auto; color: #fff; font: 700 11.3px "Open Sans", sans-serif; line-height: 17px; }

/* context menu over the canvas */
.menu { position: absolute; left: 162px; top: 274px; width: 242px; height: 478px; padding: 1px 3px 0 3px; border: 1px solid #a9a9a9; background: #fff; box-shadow: 1px 3px 8px rgba(0, 10, 40, .45); }
.mi { display: flex; align-items: center; padding: 0 0 2px 21px; }
.mi > svg:first-child { width: 16px; height: 15px; margin-left: -21px; margin-right: 5px; }
.mi span { flex: none; width: 169px; white-space: nowrap; }
.mi kbd { font: inherit; font-family: "Noto Sans", "DejaVu Sans", sans-serif; }
.mi .sub { width: 10px; height: 16px; margin-left: 33px; }
.menu hr { height: 2px; margin: 0 1px 0 0; border: 0; background: #bdbdbd; }
.hover { margin: 0 1px 0 0; background: #d9d9d9; }
.h19 { height: 19px; }
.h20 { height: 20px; }
.h21 { height: 21px; }
.h22 { height: 22px; }
.h23 { height: 23px; }
.h24 { height: 24px; }
```
